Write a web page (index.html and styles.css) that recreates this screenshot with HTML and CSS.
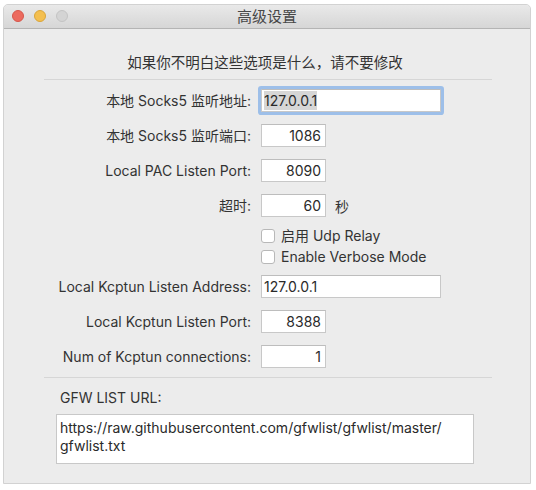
FILE: index.html
```html
<!DOCTYPE html>
<html lang="zh-CN">
<head>
<meta charset="utf-8">
<title>高级设置</title>
<link rel="stylesheet" href="styles.css">
</head>
<body>
<div class="window">
  <div class="titlebar">
    <div class="lights">
      <span class="light red"></span>
      <span class="light yellow"></span>
      <span class="light gray"></span>
    </div>
    <div class="title">高级设置</div>
  </div>
  <div class="content">
    <div class="notice">如果你不明白这些选项是什么，请不要修改</div>
    <div class="sep sep-top"></div>

    <div class="row first">
      <div class="label">本地 Socks5 监听地址:</div>
      <div class="field wide focused"><span class="sel">127.0.0.1</span></div>
    </div>
    <div class="row">
      <div class="label">本地 Socks5 监听端口:</div>
      <div class="field short">1086</div>
    </div>
    <div class="row">
      <div class="label">Local PAC Listen Port:</div>
      <div class="field short">8090</div>
    </div>
    <div class="row">
      <div class="label">超时:</div>
      <div class="field short">60</div>
      <div class="unit">秒</div>
    </div>
    <div class="check-row cb-first">
      <div class="label"></div>
      <span class="box"></span>
      <span class="check-label">启用 Udp Relay</span>
    </div>
    <div class="check-row">
      <div class="label"></div>
      <span class="box"></span>
      <span class="check-label">Enable Verbose Mode</span>
    </div>
    <div class="row after-cb">
      <div class="label">Local Kcptun Listen Address:</div>
      <div class="field wide">127.0.0.1</div>
    </div>
    <div class="row">
      <div class="label">Local Kcptun Listen Port:</div>
      <div class="field short">8388</div>
    </div>
    <div class="row">
      <div class="label">Num of Kcptun connections:</div>
      <div class="field short">1</div>
    </div>

    <div class="sep sep-bottom"></div>
    <div class="url-label">GFW LIST URL:</div>
    <div class="textarea">https://raw.githubusercontent.com/gfwlist/gfwlist/master/<br>gfwlist.txt</div>
  </div>
</div>
</body>
</html>
```

FILE: styles.css
```css
html, body {
  margin: 0;
  padding: 0;
  background: #ffffff;
}

body {
  font-family: "Inter", "Noto Sans CJK SC", sans-serif;
  font-size: 14px;
  color: #333333;
}

.window {
  box-sizing: border-box;
  margin: 4px 0 0 3px;
  width: 528px;
  height: 480px;
  background: #ececec;
  border: 1px solid #d2d2d2;
  border-radius: 5px 5px 0 0;
  overflow: hidden;
}

.titlebar {
  position: relative;
  height: 23px;
  background: linear-gradient(#e9e9e9, #d6d6d6);
  border-bottom: 1px solid #b4b4b4;
  display: flex;
  align-items: center;
  justify-content: center;
}

.lights {
  position: absolute;
  left: 8px;
  top: 5px;
  display: flex;
  gap: 10px;
}

.light {
  width: 12px;
  height: 12px;
  border-radius: 50%;
  box-sizing: border-box;
}

.red { background: #ec6a5e; border: 1px solid #d6564b; }
.yellow { background: #f4bf4f; border: 1px solid #d9a53a; }
.gray { background: #d4d4d4; border: 1px solid #c4c4c4; }

.title {
  color: #474747;
  font-size: 15px;
  line-height: 18px;
}

.content {
  display: flex;
  flex-direction: column;
}

.notice {
  margin-top: 25px;
  text-align: center;
  font-size: 14.5px;
  line-height: 18px;
  padding-right: 4px;
}

.sep {
  height: 1px;
  background: #d6d6d6;
  margin-left: 40px;
  margin-right: 38px;
}

.sep-top { margin-top: 7px; }

.row {
  display: flex;
  align-items: center;
  margin-top: 12px;
  height: 23px;
}

.row.first { margin-top: 9px; }
.row.after-cb { margin-top: 9px; }

.label {
  width: 247px;
  flex: none;
  text-align: right;
  margin-right: 10px;
  line-height: 18px;
}

.field {
  box-sizing: border-box;
  height: 23px;
  line-height: 21px;
  background: #ffffff;
  border: 1px solid #c8c8c8;
  border-top-color: #bdbdbd;
  color: #2a2a2a;
}

.field.wide {
  width: 180px;
  padding-left: 2px;
}

.field.short {
  width: 65px;
  text-align: right;
  padding-right: 4px;
}

.field.focused {
  box-shadow: 0 0 0 3px #9dbfe9;
  border-radius: 1px;
}

.sel {
  background: #d6d6d6;
  padding: 1px 0;
}

.unit {
  margin-left: 9px;
}

.check-row {
  display: flex;
  align-items: center;
  height: 18px;
  margin-top: 3px;
}

.check-row.cb-first { margin-top: 10px; }

.box {
  box-sizing: border-box;
  width: 14px;
  height: 14px;
  background: #ffffff;
  border: 1px solid #b8b8b8;
  border-radius: 3px;
  flex: none;
}

.check-label {
  margin-left: 6px;
  line-height: 18px;
}

.sep-bottom { margin-top: 9px; }

.url-label {
  margin-top: 11px;
  margin-left: 56px;
  line-height: 18px;
}

.textarea {
  box-sizing: border-box;
  margin-top: 7px;
  margin-left: 52px;
  width: 418px;
  height: 50px;
  padding: 4px 3px;
  line-height: 18px;
  background: #ffffff;
  border: 1px solid #c8c8c8;
  color: #2a2a2a;
}
```
